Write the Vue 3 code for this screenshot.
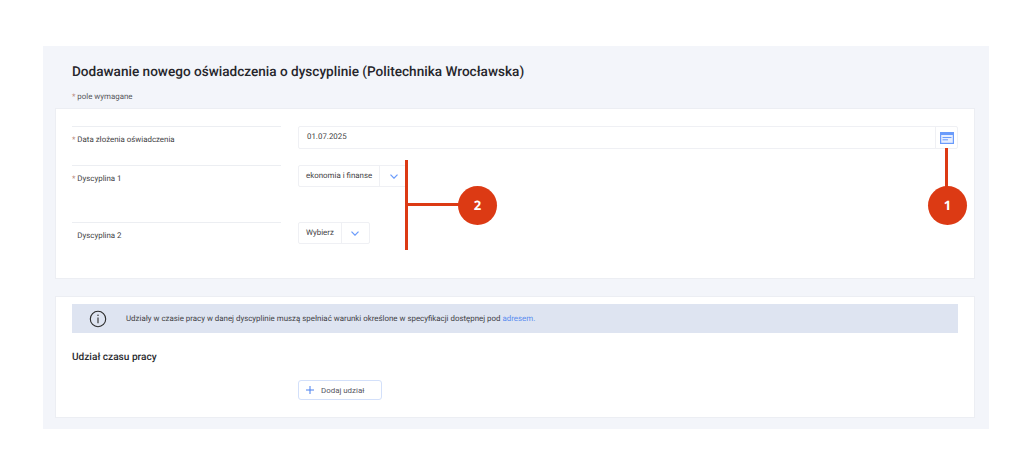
<template>
  <div class="page">
    <div class="panel">
      <h1 class="title">Dodawanie nowego oświadczenia o dyscyplinie (Politechnika Wrocławska)</h1>
      <p class="required"><span class="star">*</span> pole wymagane</p>

      <section class="card card-form">
        <div class="row row-date">
          <div class="label"><span class="star">*</span> Data złożenia oświadczenia</div>
          <div class="date-field">
            <span class="date-value">01.07.2025</span>
            <span class="date-btn">
              <svg width="14" height="12" viewBox="0 0 14 12">
                <rect x="0.6" y="0.6" width="12.8" height="10.8" fill="#e6eeff" stroke="#6a9bfb" stroke-width="1.2" />
                <rect x="0" y="0" width="14" height="3" fill="#6a9bfb" />
                <path d="M2.5 5.5H11.5M2.5 7.8H8" stroke="#6a9bfb" fill="none" />
              </svg>
            </span>
          </div>
        </div>

        <div class="row row-first">
          <div class="label"><span class="star">*</span> Dyscyplina 1</div>
          <div class="select">
            <span class="select-value">ekonomia i finanse</span>
            <span class="select-arrow">
              <svg width="8" height="5" viewBox="0 0 8 5"><path d="M0.5 0.6L4 4.2L7.5 0.6" fill="none" stroke="#6a9bfb" stroke-width="1.2" /></svg>
            </span>
          </div>
        </div>

        <div class="row">
          <div class="label"><span class="star hidden">*</span> Dyscyplina 2</div>
          <div class="select">
            <span class="select-value">Wybierz</span>
            <span class="select-arrow">
              <svg width="8" height="5" viewBox="0 0 8 5"><path d="M0.5 0.6L4 4.2L7.5 0.6" fill="none" stroke="#6a9bfb" stroke-width="1.2" /></svg>
            </span>
          </div>
        </div>
      </section>

      <section class="card card-share">
        <div class="info-bar">
          <svg class="info-icon" width="18" height="18" viewBox="0 0 18 18">
            <circle cx="9" cy="9" r="7.7" fill="none" stroke="#2b2b2b" stroke-width="1.1" />
            <path d="M9 7.6V13.2" stroke="#2b2b2b" stroke-width="1.1" />
            <circle cx="9" cy="5.3" r="0.75" fill="#2b2b2b" />
          </svg>
          <span>Udziały w czasie pracy w danej dyscyplinie muszą spełniać warunki określone w specyfikacji dostępnej pod <a class="link">adresem.</a></span>
        </div>
        <h2 class="subtitle">Udział czasu pracy</h2>
        <div class="add-row">
          <button class="add-btn">
            <svg width="8" height="8" viewBox="0 0 8 8"><path d="M4 0V8M0 4H8" stroke="#4a80ee" stroke-width="1" /></svg>
            Dodaj udział
          </button>
        </div>
      </section>
    </div>

    <!-- adnotacje na zrzucie -->
    <div class="mark-line line-1"></div>
    <div class="badge badge-1">1</div>
    <div class="mark-line line-2"></div>
    <div class="mark-line line-2h"></div>
    <div class="badge badge-2">2</div>
  </div>
</template>

<script setup>
</script>

<style>
html, body {
  background: #fff;
}
</style>

<style scoped>
.page {
  position: relative;
  width: 1024px;
  height: 474px;
  padding: 46px 35px 0 43px;
  box-sizing: border-box;
  font-family: Roboto, "Liberation Sans", sans-serif;
  color: #3a3a3a;
  overflow: hidden;
  text-rendering: geometricPrecision;
}

.panel {
  height: 383px;
  box-sizing: border-box;
  padding: 18px 14px 0 12px;
  background: #f3f5fa;
}

.title {
  margin: 0 0 0 17px;
  font-size: 13.58px;
  line-height: 16px;
  font-weight: 500;
  color: #26262b;
}

.required {
  margin: 11px 0 0 17px;
  font-size: 7.9px;
  line-height: 12px;
  color: #55555a;
}

.star {
  color: #b98a80;
}

.hidden {
  visibility: hidden;
}

.card {
  background: #fff;
  border: 1px solid #eceef3;
  box-sizing: border-box;
  width: 920px;
  padding: 0 16px;
}

.card-form {
  height: 171px;
  margin-top: 5px;
  padding-top: 17px;
}

.card-share {
  height: 122px;
  margin-top: 17px;
  padding-top: 7px;
}

.row {
  display: flex;
  column-gap: 17px;
  align-items: flex-start;
  height: 57px;
}

.row-date {
  height: 39px;
}

.label {
  width: 209px;
  flex: none;
  box-sizing: border-box;
  border-top: 1px solid #eceef2;
  padding-top: 7px;
  font-size: 7.9px;
  line-height: 12px;
  color: #3f3f45;
}

.date-field {
  display: flex;
  align-items: center;
  width: 660px;
  height: 23px;
  box-sizing: border-box;
  border: 1px solid #eff0f4;
  border-radius: 2px;
}

.date-value {
  flex: 1;
  padding-left: 8px;
  font-size: 7.9px;
  line-height: 18px;
  padding-bottom: 2px;
  color: #3f3f45;
}

.date-btn {
  display: flex;
  align-items: center;
  justify-content: center;
  width: 21px;
  height: 100%;
  border-left: 1px solid #eff0f4;
}

.select {
  display: inline-flex;
  height: 22px;
  box-sizing: border-box;
  border: 1px solid #eff0f4;
  border-radius: 2px;
}

.select-value {
  padding: 4px 7px 0;
  font-size: 7.9px;
  line-height: 12px;
  color: #3f3f45;
}

.select-arrow {
  display: flex;
  align-items: center;
  justify-content: center;
  width: 27px;
  border-left: 1px solid #eff0f4;
}

.info-bar {
  display: flex;
  align-items: center;
  height: 29px;
  padding-left: 17px;
  background: #dee4f1;
  font-size: 7.9px;
  color: #3f3f45;
}

.info-icon {
  margin-right: 19px;
  flex: none;
}

.link {
  color: #5a8cf0;
}

.subtitle {
  margin: 18px 0 0;
  font-size: 10.1px;
  line-height: 14px;
  font-weight: 500;
  color: #2a2a2e;
}

.add-row {
  margin-top: 15px;
  padding-left: 226px;
}

.add-btn {
  display: flex;
  align-items: center;
  gap: 7px;
  width: 84px;
  height: 20px;
  box-sizing: border-box;
  padding: 0 0 0 7px;
  background: #fff;
  border: 1px solid #d3e0fa;
  border-radius: 3px;
  font-family: inherit;
  font-size: 7.9px;
  color: #55555f;
}

.mark-line {
  position: absolute;
  background: #dc3a14;
}

.line-1 {
  left: 945px;
  top: 148px;
  width: 3px;
  height: 40px;
}

.line-2 {
  left: 405px;
  top: 160px;
  width: 3px;
  height: 90px;
}

.line-2h {
  left: 408px;
  top: 203px;
  width: 54px;
  height: 3px;
}

.badge {
  position: absolute;
  top: 186px;
  width: 39px;
  height: 39px;
  border-radius: 50%;
  background: #dc3a14;
  color: #fff;
  font-family: "Open Sans", "Liberation Sans", sans-serif;
  font-size: 13px;
  font-weight: 700;
  line-height: 39px;
  text-align: center;
}

.badge-1 {
  left: 928px;
}

.badge-2 {
  left: 458px;
}
</style>
